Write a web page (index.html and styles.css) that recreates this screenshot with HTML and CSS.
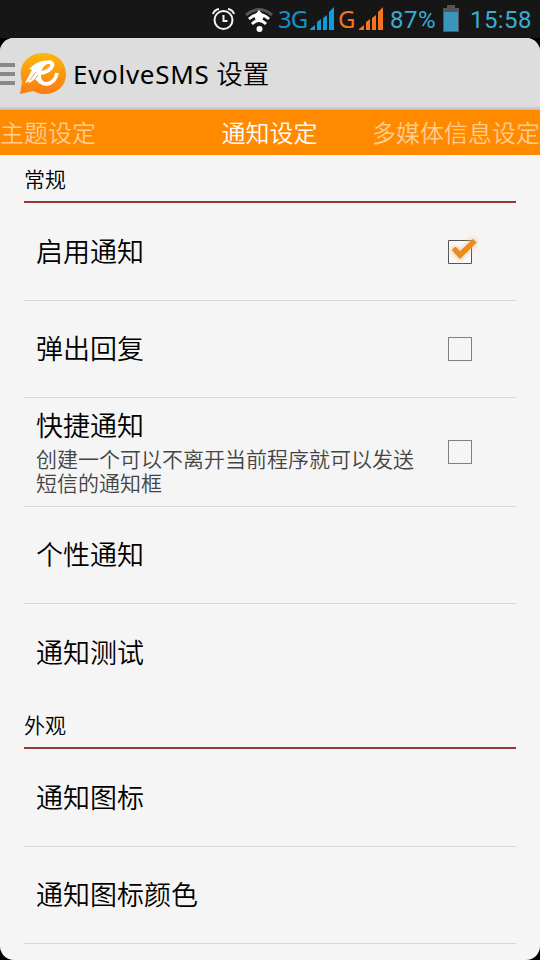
FILE: index.html
```html
<!DOCTYPE html>
<html lang="zh-CN">
<head>
<meta charset="utf-8">
<title>EvolveSMS 设置</title>
<link rel="stylesheet" href="styles.css">
</head>
<body>
<div class="status">
  <svg class="status-icons" width="386" height="38" viewBox="0 0 386 38">
    <g fill="none" stroke="#f4f4f4" stroke-width="2">
      <circle cx="223.500" cy="20" r="9"/>
      <path d="M223.500 15v6h4M213 14q1-4 6-5M234 14q-1-4-6-5"/>
    </g>
    <path d="M246 15Q259 4 272 15" fill="none" stroke="#555" stroke-width="3"/>
    <g fill="none" stroke="#fff" stroke-width="3">
      <path d="M249 19Q259 10 269 19M252 24Q259 17 266 24"/>
    </g>
    <path d="M259 10l5 6-2 5-3-2-3 2-2-5z" fill="#fff"/>
    <circle cx="259.500" cy="29" r="3" fill="#fff"/>
    <path d="M310 30v-1l5-4v5zM317 30v-8l4-3v11zM323 30v-12l4-3v15zM329 30v-18l5-5v23z" fill="#0d9ddb"/>
    <path d="M359 30v-1l5-4v5zM366 30v-8l4-3v11zM372 30v-12l4-3v15zM378 30v-18l5-5v23z" fill="#f47420"/>
  </svg>
  <span class="net net-3g">3G</span>
  <span class="net net-g">G</span>
  <span class="percent">87%</span>
  <svg class="battery" width="16" height="27" viewBox="0 0 16 27"><path d="M0 3h4V0h8v3h4v24H0z" fill="#555"/><path d="M1 7h14v19H1z" fill="#3a96bd"/></svg>
  <span class="clock">15:58</span>
</div>
<div class="app">
  <header class="bar">
    <div class="drawer"><i></i><i></i><i></i></div>
    <svg class="logo" width="50" height="44" viewBox="0 0 50 44">
      <defs><linearGradient id="g" x1="0" y1="0" x2="0" y2="1"><stop offset="0" stop-color="#fdb70a"/><stop offset="1" stop-color="#fb7b14"/></linearGradient></defs>
      <path d="M25 1C39 1 48 10 48 22S39 42 26 42c-5 0-8-2-11-3L2 42l2-12C-1 13 10 1 25 1z" fill="url(#g)"/>
      <path d="M22 21.500Q33 19 34.500 13Q34 9 28 10.500Q21 14 21 23Q21 32 28.500 32Q37 31 39 21" fill="none" stroke="#fff" stroke-width="3.800"/>
      <path d="M28 8.500Q18 9 11 17L14 18L7 31L12 29L10 32L17 27L22 32L21 18Z" fill="#fff"/>
      <path d="M12 28l6-8M17 27l3-4" fill="none" stroke="#e7a05f" stroke-width="1"/>
    </svg>
    <h1><span>EvolveSMS</span> 设置</h1>
  </header>
  <nav class="tabs"><span>主题设定</span><span class="active">通知设定</span><span>多媒体信息设定</span></nav>
  <main>
    <h2>常规</h2>
    <div class="row"><div class="name">启用通知</div>
      <svg class="check" width="36" height="36" viewBox="0 0 36 36">
        <defs><filter id="b" x="-30%" y="-30%" width="160%" height="160%"><feGaussianBlur stdDeviation="2"/></filter></defs>
        <path d="M6.500 6.500h23v23h-23z" fill="#fafafa" stroke="#555"/>
        <path d="M10 16l3-3 5 5L31 5l3 3-16 17z" fill="#ffb974" stroke="#ffb974" stroke-width="3" filter="url(#b)" opacity=".7"/>
        <path d="M10.500 16l3-3 4.500 5L31 5.500l3 3L18 24.500z" fill="#f58a12" stroke="#c5894a" stroke-width="1"/>
      </svg></div>
    <div class="row"><div class="name">弹出回复</div><span class="box"></span></div>
    <div class="row tall"><div class="name">快捷通知<p>创建一个可以不离开当前程序就可以发送<br>短信的通知框</p></div><span class="box"></span></div>
    <div class="row"><div class="name">个性通知</div></div>
    <div class="row last"><div class="name">通知测试</div></div>
    <h2>外观</h2>
    <div class="row"><div class="name">通知图标</div></div>
    <div class="row"><div class="name">通知图标颜色</div></div>
  </main>
</div>
</body>
</html>
```
FILE: styles.css
```css
* { box-sizing: border-box; }
body {
  margin: 0;
  width: 540px;
  height: 960px;
  overflow: hidden;
  background: #000;
  color: #000;
  font-family: "Noto Sans", "Noto Sans CJK SC", sans-serif;
  font-weight: 350;
}
.status {
  position: relative;
  height: 38px;
  background: #161616;
  font-family: Roboto, sans-serif;
  font-weight: 400;
  line-height: 38px;
  color: #35afd8;
}
.status-icons { display: block; }
.status span, .battery { position: absolute; top: 0; white-space: nowrap; }
.status .net { font-family: "Noto Sans", sans-serif; font-size: 24px; font-weight: 400; }
.status .net-3g { left: 278px; color: #168fcd; letter-spacing: -1px; }
.status .net-g { left: 338px; color: #f47420; }
.status .percent { left: 390px; top: 1px; font-size: 24px; letter-spacing: .5px; font-weight: 400; }
.status .battery { left: 443px; top: 5px; }
.status .clock { left: 470px; top: 1px; font-size: 24px; letter-spacing: .4px; font-weight: 400; }
.app {
  height: 922px;
  overflow: hidden;
  border-radius: 14px;
  background: #f5f5f5;
}
.bar {
  display: flex;
  align-items: center;
  height: 72px;
  background: linear-gradient(#ddd 68px, #bcbcbc 72px);
}
.drawer { display: grid; gap: 5px; width: 15px; }
.drawer i { height: 4px; background: #888; }
.logo { margin-left: 3px; }
h1 { margin: 0 0 0 5px; font-size: 26.5px; font-weight: 350; line-height: 36px; white-space: nowrap; }
h1 span { font-size: 26px; font-weight: 400; letter-spacing: .7px; }
.tabs {
  display: grid;
  grid-template-columns: 1fr 97px 1fr;
  height: 45px;
  background: #ff8a00;
  color: #ffcd91;
  font-size: 24px;
  line-height: 45px;
  white-space: nowrap;
}
.tabs span:last-child { justify-self: end; }
.tabs .active { color: #fff; }
main { padding: 0 24px; }
h2 {
  height: 48px;
  margin: 0;
  border-bottom: 2px solid #943838;
  font-size: 21px;
  font-weight: 350;
  line-height: 48px;
}
.row {
  display: flex;
  align-items: center;
  justify-content: space-between;
  height: 97px;
  padding: 0 38px 0 12px;
  border-bottom: 1px solid #d9d9d9;
  font-size: 27px;
  line-height: 36px;
}
h2 + .row { height: 98px; }
.row.tall { height: 109px; }
.row.last { border-bottom: 0; }
.row p {
  margin: 4px 0 0;
  font-family: "Liberation Sans", "Noto Sans CJK SC", sans-serif;
  font-size: 21px;
  line-height: 24px;
  color: #444;
  white-space: nowrap;
}
.box { flex: none; width: 24px; height: 24px; margin-right: 6px; border: 1px solid #808080; }
```
